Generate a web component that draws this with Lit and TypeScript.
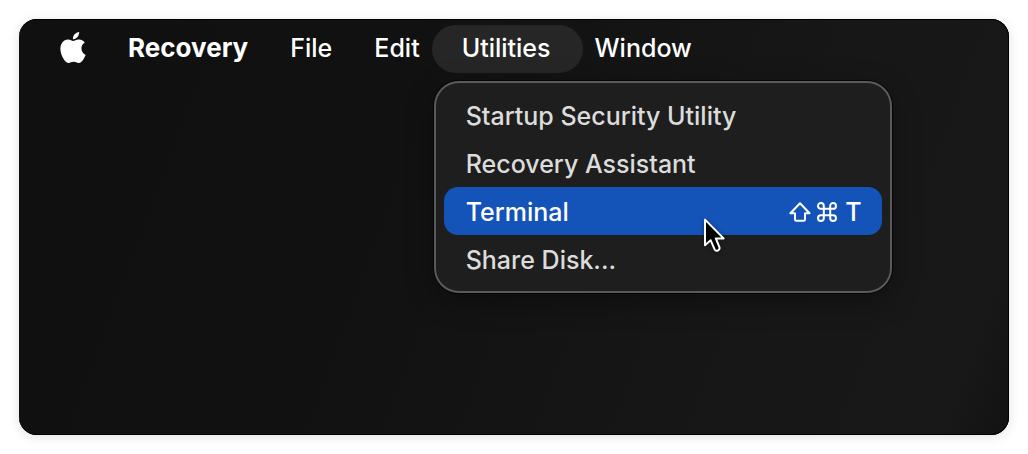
import { LitElement, html, css, svg, nothing } from "lit";
import { customElement, property } from "lit/decorators.js";

const appleLogo = svg`<path d="M12.152 6.896c-.948 0-2.415-1.078-3.96-1.04-2.04.027-3.91 1.183-4.961 3.014-2.117 3.675-.546 9.103 1.519 12.09 1.013 1.454 2.208 3.09 3.792 3.039 1.52-.065 2.09-.987 3.935-.987 1.831 0 2.35.987 3.96.948 1.637-.026 2.676-1.48 3.676-2.948 1.156-1.688 1.636-3.325 1.662-3.415-.039-.013-3.182-1.221-3.22-4.857-.026-3.04 2.48-4.494 2.597-4.559-1.429-2.09-3.623-2.324-4.39-2.376-2-.156-3.675 1.09-4.61 1.09zM15.53 3.83c.843-1.012 1.4-2.427 1.245-3.83-1.207.052-2.662.805-3.532 1.818-.78.896-1.454 2.338-1.273 3.714 1.338.104 2.715-.688 3.559-1.701"/>`;

interface MenuEntry {
  label: string;
  key?: string;
}

const utilities: MenuEntry[] = [
  { label: "Startup Security Utility" },
  { label: "Recovery Assistant" },
  { label: "Terminal", key: "T" },
  { label: "Share Disk..." },
];

@customElement("drop-menu")
export class DropMenu extends LitElement {
  @property({ attribute: false }) entries: MenuEntry[] = [];
  @property() current = "";

  static styles = css`
    :host {
      display: block;
      box-sizing: border-box;
      width: 458px;
      padding: 8px;
      border: 2px solid #5a5a5a;
      border-radius: 25px;
      background: #1e1e1e;
      box-shadow: 0 0 0 1px #050505, 0 8px 28px rgba(0, 0, 0, 0.35);
    }
    .entry {
      position: relative;
      display: flex;
      align-items: center;
      justify-content: space-between;
      width: 100%;
      height: 48px;
      padding: 2px 20px 0 22px;
      border: 0;
      border-radius: 14px;
      background: none;
      color: #dcdcdc;
      font: 500 25px/46px Inter, "Liberation Sans", sans-serif;
      text-align: left;
      white-space: nowrap;
    }
    .current {
      background: #1453b7;
      color: #fff;
    }
    .keys {
      display: flex;
      align-items: center;
      gap: 6px;
      font: inherit;
    }
    .key {
      display: block;
      fill: none;
      stroke: currentColor;
      stroke-width: 2;
      stroke-linejoin: round;
    }
    .letter {
      padding-left: 2px;
    }
    .pointer {
      position: absolute;
      right: 157px;
      top: 28px;
      z-index: 1;
      filter: drop-shadow(0 1px 2px rgba(0, 0, 0, 0.4));
    }
  `;

  private shortcut(key: string) {
    return html`<kbd class="keys">
        <svg class="key" width="22" height="20" viewBox="0 0 22 20" role="img" aria-label="Shift">
          <path d="M11 1.2 1.4 11.2H6V17.4Q6 18.8 7.4 18.8H14.6Q16 18.8 16 17.4V11.2H20.6Z" />
        </svg>
        <svg class="key" width="20" height="20" viewBox="0 0 20 20" role="img" aria-label="Command">
          <path d="M6.8 6.8V3.9A2.9 2.9 0 1 0 3.9 6.8H16.1A2.9 2.9 0 1 0 13.2 3.9V16.1A2.9 2.9 0 1 0 16.1 13.2H3.9A2.9 2.9 0 1 0 6.8 16.1Z" />
        </svg>
        <span class="letter">${key}</span>
      </kbd>
      <svg class="pointer" width="22" height="38" viewBox="0 0 22 38" aria-hidden="true">
        <path d="M2 4.6V30.2L7.6 25.2L11.6 34.4Q12.6 36.4 14.8 35.6Q17.2 34.4 16.4 32.2L12.8 23.4H20.6Z"
          fill="#000" stroke="#fff" stroke-width="2" stroke-linejoin="round" />
      </svg>`;
  }

  render() {
    return this.entries.map(
      (e) => html`<button role="menuitem" class="entry ${e.label === this.current ? "current" : ""}">
        <span>${e.label}</span>${e.key ? this.shortcut(e.key) : nothing}
      </button>`
    );
  }
}

@customElement("app-root")
export class AppRoot extends LitElement {
  static styles = css`
    :host {
      display: flex;
      box-sizing: border-box;
      min-height: 100vh;
      padding: 19px;
      background: #fff;
    }
    .screen {
      flex: 1;
      border-radius: 18px;
      background: linear-gradient(110deg, #101010 0%, #111 35%, #171717 75%, #181818 94%, #121212 100%);
      box-shadow: inset 0 1px 0 #000, inset 0 -1px 0 #000, inset -1px 0 0 #000, 0 2px 12px rgba(0, 0, 0, 0.12);
    }
    .bar {
      display: flex;
      align-items: center;
      gap: 42px;
      padding: 6px 41px;
    }
    .title {
      display: block;
      height: 48px;
      padding: 0 0 2px;
      border: 0;
      background: none;
      color: #fff;
      font: 500 25px/46px Inter, "Liberation Sans", sans-serif;
      white-space: nowrap;
    }
    .app {
      font-size: 26px;
      font-weight: 700;
    }
    .logo {
      display: block;
      height: 48px;
      padding: 0 0 4px;
      border: 0;
      background: none;
    }
    .logo svg {
      display: block;
      fill: #fff;
    }
    .slot {
      position: relative;
      margin: 0 -30px;
    }
    .open {
      padding: 0 32px 2px 30px;
      border-radius: 24px;
      background: #262626;
    }
    .menu {
      position: absolute;
      left: 2px;
      top: 56px;
    }
  `;

  render() {
    return html`<main class="screen">
      <nav class="bar" aria-label="Menu bar">
        <button class="logo" aria-label="Apple">
          <svg width="26" height="31" viewBox="2 0 20 24">${appleLogo}</svg>
        </button>
        <button class="title app">Recovery</button>
        <button class="title">File</button>
        <button class="title">Edit</button>
        <div class="slot">
          <button class="title open" aria-haspopup="menu" aria-expanded="true">Utilities</button>
          <drop-menu class="menu" role="menu" .entries=${utilities} current="Terminal"></drop-menu>
        </div>
        <button class="title">Window</button>
      </nav>
    </main>`;
  }
}
